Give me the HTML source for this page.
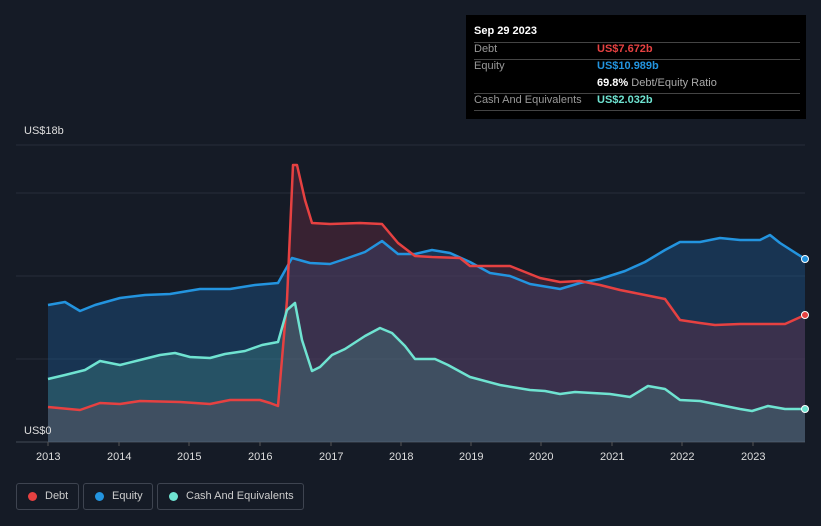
<!DOCTYPE html>
<html><head><style>
body{margin:0;background:#151b26;font-family:"Liberation Sans",sans-serif;}
#w{position:relative;width:821px;height:526px;overflow:hidden;background:#151b26;}
.tip{position:absolute;left:466px;top:15px;width:340px;height:104px;background:#000;color:#fff;font-size:11px;}
.tip .r{position:absolute;left:8px;width:326px;border-top:1px solid #444;}
.lab{color:#999;position:absolute;left:8px}
.val{position:absolute;left:131px;font-weight:bold}
.lg{position:absolute;top:483px;height:27px;border:1px solid #3e4450;border-radius:3px;color:#ccc;font-size:11px;box-sizing:border-box;white-space:nowrap}
.lg i{position:absolute;left:11px;top:8px;width:9px;height:9px;border-radius:50%}
.lg span{position:absolute;left:28px;top:6px}
.ax{position:absolute;top:451px;color:#ddd;font-size:11px;}
</style></head><body><div id="w">
<svg width="821" height="526" style="position:absolute;left:0;top:0">
<g stroke="#262d39" stroke-width="1">
<line x1="16" y1="145" x2="805" y2="145"/><line x1="16" y1="193" x2="805" y2="193"/><line x1="16" y1="276" x2="805" y2="276"/><line x1="16" y1="359" x2="805" y2="359"/><line x1="16" y1="442" x2="805" y2="442" stroke="#444b57"/>
</g>
<polygon fill="rgba(30,90,150,0.4)" points="48,442 48,305 65,302 80,311 95,305 120,298 145,295 170,294 200,289 230,289 255,285 278,283 292,258 310,263 330,264 345,259 365,252 382,241 398,254 415,254 432,250 450,253 470,262 490,273 510,276 530,284 560,289 580,283 600,279 625,271 645,262 665,250 680,242 700,242 720,238 740,240 760,240 770,235 780,243 805,259 805,442"/>
<polygon fill="rgba(110,45,70,0.4)" points="48,442 48,407 80,410 100,403 120,404 140,401 180,402 210,404 230,400 260,400 270,403 278,406 287,300 293,165 297,165 305,200 312,223 330,224 360,223 382,224 398,243 415,256 432,257 460,258 470,266 510,266 540,278 560,282 580,281 600,285 620,290 640,294 665,299 680,320 700,323 715,325 740,324 785,324 805,315 805,442"/>
<polygon fill="rgba(80,170,160,0.25)" points="48,442 48,379 65,375 85,370 100,361 120,365 140,360 160,355 175,353 190,357 210,358 225,354 245,351 262,345 278,342 287,310 295,303 302,340 312,371 320,367 332,355 345,349 365,336 380,328 392,333 405,346 415,359 435,359 448,365 470,377 500,385 530,390 545,391 560,394 575,392 610,394 630,397 648,386 665,389 680,400 700,401 720,405 740,409 752,411 768,406 785,409 805,409 805,442"/>
<g fill="none" stroke-width="2.5" stroke-linejoin="round">
<polyline stroke="#2394df" points="48,305 65,302 80,311 95,305 120,298 145,295 170,294 200,289 230,289 255,285 278,283 292,258 310,263 330,264 345,259 365,252 382,241 398,254 415,254 432,250 450,253 470,262 490,273 510,276 530,284 560,289 580,283 600,279 625,271 645,262 665,250 680,242 700,242 720,238 740,240 760,240 770,235 780,243 805,259"/>
<polyline stroke="#e64141" points="48,407 80,410 100,403 120,404 140,401 180,402 210,404 230,400 260,400 270,403 278,406 287,300 293,165 297,165 305,200 312,223 330,224 360,223 382,224 398,243 415,256 432,257 460,258 470,266 510,266 540,278 560,282 580,281 600,285 620,290 640,294 665,299 680,320 700,323 715,325 740,324 785,324 805,315"/>
<polyline stroke="#6fe3d1" points="48,379 65,375 85,370 100,361 120,365 140,360 160,355 175,353 190,357 210,358 225,354 245,351 262,345 278,342 287,310 295,303 302,340 312,371 320,367 332,355 345,349 365,336 380,328 392,333 405,346 415,359 435,359 448,365 470,377 500,385 530,390 545,391 560,394 575,392 610,394 630,397 648,386 665,389 680,400 700,401 720,405 740,409 752,411 768,406 785,409 805,409"/>
</g>
<circle cx="805" cy="259" r="3.5" fill="#2394df" stroke="#fff" stroke-width="1"/>
<circle cx="805" cy="315" r="3.5" fill="#e64141" stroke="#fff" stroke-width="1"/>
<circle cx="805" cy="409" r="3.5" fill="#6fe3d1" stroke="#fff" stroke-width="1"/>
<g stroke="#555" stroke-width="1"><line x1="48" y1="442" x2="48" y2="446"/><line x1="119" y1="442" x2="119" y2="446"/><line x1="189" y1="442" x2="189" y2="446"/><line x1="260" y1="442" x2="260" y2="446"/><line x1="331" y1="442" x2="331" y2="446"/><line x1="401" y1="442" x2="401" y2="446"/><line x1="471" y1="442" x2="471" y2="446"/><line x1="541" y1="442" x2="541" y2="446"/><line x1="612" y1="442" x2="612" y2="446"/><line x1="682" y1="442" x2="682" y2="446"/><line x1="753" y1="442" x2="753" y2="446"/></g>
</svg>
<div style="position:absolute;left:24px;top:125px;color:#ddd;font-size:11px">US$18b</div>
<div style="position:absolute;left:24px;top:425px;color:#ddd;font-size:11px">US$0</div>
<div class="ax" style="left:36px">2013</div><div class="ax" style="left:107px">2014</div><div class="ax" style="left:177px">2015</div><div class="ax" style="left:248px">2016</div><div class="ax" style="left:319px">2017</div><div class="ax" style="left:389px">2018</div><div class="ax" style="left:459px">2019</div><div class="ax" style="left:529px">2020</div><div class="ax" style="left:600px">2021</div><div class="ax" style="left:670px">2022</div><div class="ax" style="left:741px">2023</div>
<div class="tip">
<div style="position:absolute;left:8px;top:10px;font-weight:bold">Sep 29 2023</div>
<div class="r" style="top:27px"></div>
<div class="lab" style="top:28px">Debt</div><div class="val" style="top:28px;color:#e64141">US$7.672b</div>
<div class="r" style="top:44px"></div>
<div class="lab" style="top:45px">Equity</div><div class="val" style="top:45px;color:#2394df">US$10.989b</div>
<div style="position:absolute;left:131px;top:62px"><b>69.8%</b> <span style="color:#aaa">Debt/Equity Ratio</span></div>
<div class="r" style="top:78px"></div>
<div class="lab" style="top:79px">Cash And Equivalents</div><div class="val" style="top:79px;color:#6fe3d1">US$2.032b</div>
<div class="r" style="top:95px"></div>
</div>
<div class="lg" style="left:16px;width:63px"><i style="background:#e64141"></i><span>Debt</span></div>
<div class="lg" style="left:83px;width:70px"><i style="background:#2394df"></i><span>Equity</span></div>
<div class="lg" style="left:157px;width:147px"><i style="background:#6fe3d1"></i><span>Cash And Equivalents</span></div>
</div></body></html>
